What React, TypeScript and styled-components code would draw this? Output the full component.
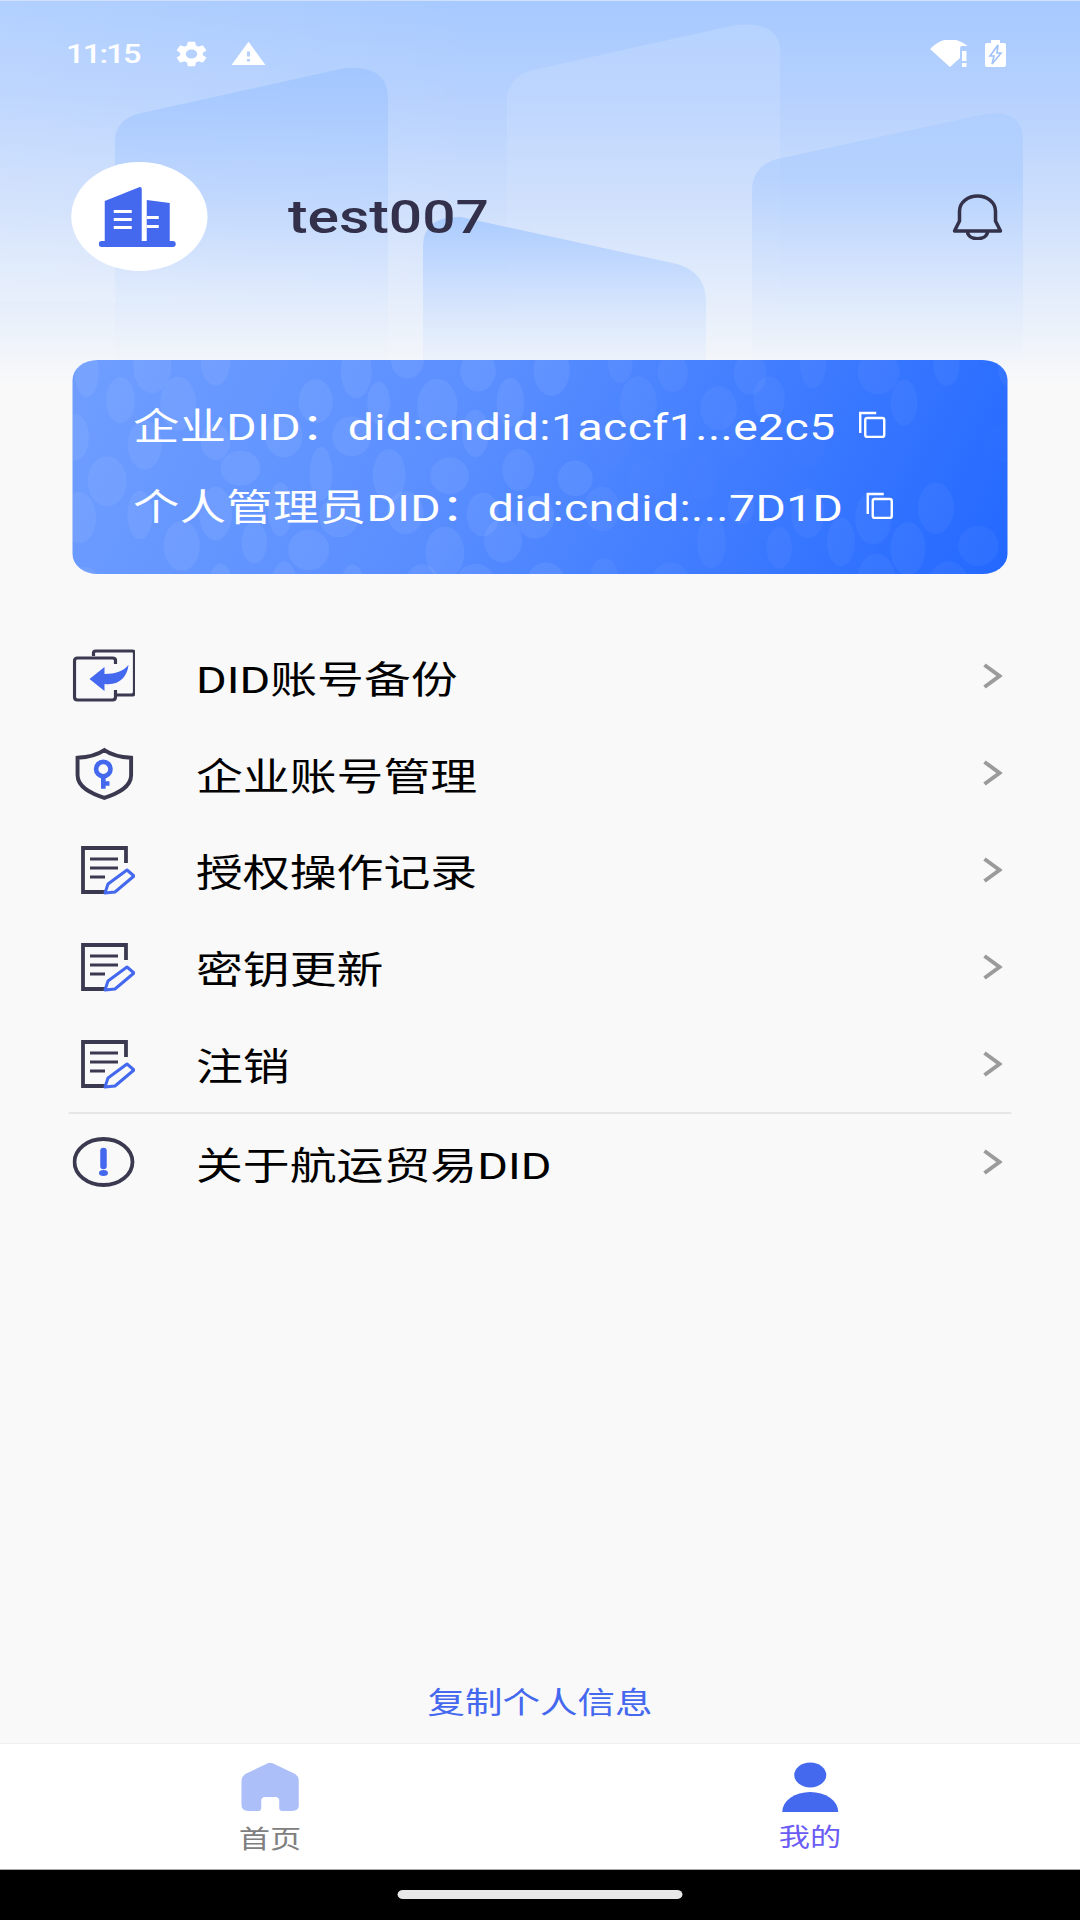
import React from "react";
import styled, { createGlobalStyle } from "styled-components";
import { MdSettings, MdWarning } from "react-icons/md";

// The reference is horizontally stretched: the whole page is laid out at 864px and widened by 1.25.
const STRETCH = 1.25;
const px = (real: number) => `${real / STRETCH}px`;

const Global = createGlobalStyle`
  html, body { margin: 0; padding: 0; width: 1080px; height: 1920px; overflow: hidden; background: #f9f9f9; }
  * { box-sizing: border-box; }
`;

const Page = styled.div`
  position: relative;
  width: 864px;
  height: 1920px;
  display: flex;
  flex-direction: column;
  transform: scaleX(${STRETCH});
  transform-origin: 0 0;
  font-family: Roboto, "Noto Sans CJK SC", sans-serif;
  background:
    linear-gradient(90deg, rgba(255, 255, 255, 0.13) 0%, rgba(255, 255, 255, 0) 45%) top / 100% 300px no-repeat,
    linear-gradient(180deg, #a6c9ff 0%, #b6d1fe 25%, #cfe0fc 55%, #e9f0fb 82%, #f9f9f9 100%) top / 100% 385px no-repeat,
    #f9f9f9;
  border-top: 1px solid #cfe0ff;
`;

const Backdrop = styled.svg`
  position: absolute;
  left: 0;
  top: 0;
  width: 864px;
  height: 385px;
`;

const StatusBar = styled.div`
  position: relative;
  height: 105px;
  padding: 0 ${px(74)} 0 ${px(66)};
  display: flex;
  align-items: center;
  color: #fff;
`;

const Clock = styled.span`
  font-size: 26px;
  font-weight: 500;
  letter-spacing: -1.4px;
  width: ${px(107)};
`;

const StatusGlyph = styled.svg<{ $w: number; $h: number; $gap?: number }>`
  width: ${(p) => px(p.$w)};
  height: ${(p) => p.$h}px;
  margin-left: ${(p) => px(p.$gap ?? 0)};
  flex: none;
`;

const StatusSpacer = styled.div`
  flex: 1;
`;

const Profile = styled.div`
  position: relative;
  display: flex;
  align-items: center;
  height: 109px;
  margin: 56px ${px(78)} 89px ${px(71)};
`;

const Avatar = styled.div`
  width: 108.8px;
  height: 109px;
  padding-right: 2px;
  border-radius: 50%;
  background: #fff;
  display: flex;
  align-items: center;
  justify-content: center;
  flex: none;
`;

const Name = styled.div`
  margin-left: ${px(81)};
  font-size: 47px;
  font-weight: 500;
  color: #32304a;
  flex: 1;
`;

const Card = styled.div`
  position: relative;
  overflow: hidden;
  height: 214px;
  margin: 0 ${px(72)};
  padding: 39px 0 0 ${px(61)};
  border-radius: 20px;
  background: linear-gradient(112deg, #6f9eff 0%, #5b8fff 40%, #2368ff 100%);
  display: flex;
  flex-direction: column;
  gap: 31px;
`;

const Bubbles = styled.svg`
  position: absolute;
  inset: 0;
  width: 100%;
  height: 100%;
`;

const CardLine = styled.div`
  position: relative;
  height: 50px;
  display: flex;
  align-items: center;
  color: #fff;
  font-size: 37px;
  letter-spacing: 0.35px;
  white-space: nowrap;
`;

const CopyIcon = styled.svg`
  width: ${px(30)};
  height: 27px;
  margin-left: ${px(20)};
  flex: none;
`;

const Menu = styled.div`
  margin: 54px ${px(72)} 0;
  display: flex;
  flex-direction: column;
`;

const Row = styled.div`
  height: 96.8px;
  display: flex;
  align-items: center;
  font-size: 37.5px;
  color: #000;
`;

const MenuIcon = styled.svg`
  width: ${px(63)};
  height: 60px;
  margin-right: ${px(61)};
  flex: none;
`;

const RowLabel = styled.div`
  flex: 1;
  white-space: nowrap;
`;

const Chevron = styled.svg`
  width: ${px(20)};
  height: 26px;
  margin-right: ${px(5)};
  flex: none;
`;

const Divider = styled.div`
  height: 2px;
  margin: 0 ${px(-3)};
  background: #e6e6e6;
`;

const CopyLink = styled.div`
  margin-top: auto;
  height: 86px;
  display: flex;
  align-items: center;
  justify-content: center;
  font-size: 30px;
  color: #4468ee;
`;

const TabBar = styled.div`
  height: 126px;
  background: #fff;
  border-top: 1px solid #efefef;
  display: grid;
  grid-template-columns: 1fr 1fr;
`;

const Tab = styled.div<{ $active?: boolean }>`
  display: flex;
  flex-direction: column;
  align-items: center;
  padding-top: 18px;
  font-size: 25px;
  line-height: 38px;
  gap: ${(p) => (p.$active ? 7 : 9)}px;
  color: ${(p) => (p.$active ? "#6a5cf5" : "#808080")};
`;

const TabIcon = styled.svg`
  width: ${px(58)};
  height: 50px;
  flex: none;
`;

const NavBar = styled.div`
  height: 51px;
  background: #000;
  border-top: 1px solid #aaa;
  display: flex;
  justify-content: center;
  padding-top: 20px;
`;

const HomePill = styled.div`
  width: ${px(284)};
  height: 9px;
  border-radius: 5px;
  background: #e8e8e8;
`;

const DARK = "#3a3950";
const BLUE = "#4468ee";

const BackupIcon = () => (
  <g transform="translate(1 4)" fill="none" stroke={DARK} strokeWidth="3.2">
    <path d="M20 6V3q0-2 2-2h37q2 0 2 2v39q0 3-3 3H43" />
    <path d="M42 14v-4q0-2-3-2H4q-3 0-3 3v36q0 3 3 3h35q3 0 3-3v-7" />
    <path d="M16 29 31 17v7c11 0 19-3 24-9-1 11-9 21-24 19v7Z" fill={BLUE} stroke="none" />
  </g>
);

const ShieldIcon = () => (
  <g transform="translate(3 5.5) scale(1.03)" fill="none">
    <path d="M28 1.5C20 7 10 8.5 2 9v17c0 12 14 18 26 22 12-4 26-10 26-22V9c-8-.5-18-2-26-7.5Z" stroke={DARK} strokeWidth="3.8" />
    <circle cx="27" cy="20" r="7" stroke={BLUE} strokeWidth="4.5" />
    <path d="M27 26v13M27 34h6" stroke={BLUE} strokeWidth="4.5" />
  </g>
);

const DocIcon = () => (
  <g transform="translate(8.5 6)" fill="none">
    <path d="M45 17V2H2v44h24" stroke={DARK} strokeWidth="3.8" />
    <path d="M9 13h28M9 22h28M9 31h15" stroke={DARK} strokeWidth="3.2" />
    <path d="M24 47l3-9 19-14 7 6-19 16Z" stroke={BLUE} strokeWidth="3" strokeLinejoin="round" />
  </g>
);

const InfoIcon = () => (
  <g fill="none">
    <ellipse cx="31" cy="30" rx="29" ry="23" stroke={DARK} strokeWidth="3.8" />
    <path d="M31 19v15" stroke={BLUE} strokeWidth="6.5" strokeLinecap="round" />
    <ellipse cx="31" cy="41" rx="4.5" ry="3" fill={BLUE} />
  </g>
);

const rows: { label: string; icon: React.ReactNode }[] = [
  { label: "DID账号备份", icon: <BackupIcon /> },
  { label: "企业账号管理", icon: <ShieldIcon /> },
  { label: "授权操作记录", icon: <DocIcon /> },
  { label: "密钥更新", icon: <DocIcon /> },
  { label: "注销", icon: <DocIcon /> },
];

const bubbleList = (() => {
  const out: { x: number; y: number; rx: number; ry: number; o: number }[] = [];
  const r = (n: number) => {
    const s = Math.sin(n * 127.1 + 11.7) * 43758.5453;
    return s - Math.floor(s);
  };
  for (let row = 0; row < 7; row++) {
    for (let col = 0; col < 15; col++) {
      const id = row * 15 + col;
      const x = col * 66 + (row % 2) * 33 + r(id) * 20;
      const y = row * 36 + r(id + 300) * 14;
      const middle = y > 50 && y < 130;
      const o = x > 520 ? (middle ? 0.012 : 0.045) : 0.065;
      if (r(id + 600) < 0.2) continue;
      out.push({ x, y, rx: 11 + r(id + 900) * 10, ry: 17 + r(id + 1200) * 11, o });
    }
  }
  return out;
})();

const CopySvg = () => (
  <CopyIcon viewBox="0 0 30 27" preserveAspectRatio="none" fill="none" stroke="#fff" strokeWidth="2.4">
    <path d="M4 22V2h16" />
    <rect x="9" y="7" width="19" height="19" rx="2" />
  </CopyIcon>
);

const ChevronSvg = () => (
  <Chevron viewBox="0 0 20 26" preserveAspectRatio="none" fill="none" stroke="#9b9b9b" strokeWidth="4">
    <path d="M2 2 17 13 2 24" />
  </Chevron>
);

export default function App() {
  return (
    <Page>
      <Global />
      <Backdrop viewBox="0 0 1080 385" preserveAspectRatio="none">
        <defs>
          <linearGradient id="bA" gradientUnits="userSpaceOnUse" x1="0" y1="70" x2="0" y2="370">
            <stop offset="0" stopColor="#a2c6ff" stopOpacity="0.95" />
            <stop offset="0.55" stopColor="#b6d2ff" stopOpacity="0.35" />
            <stop offset="1" stopColor="#dfeaff" stopOpacity="0" />
          </linearGradient>
          <linearGradient id="bB" gradientUnits="userSpaceOnUse" x1="0" y1="24" x2="0" y2="370">
            <stop offset="0" stopColor="#ffffff" stopOpacity="0.14" />
            <stop offset="1" stopColor="#ffffff" stopOpacity="0" />
          </linearGradient>
          <linearGradient id="bC" gradientUnits="userSpaceOnUse" x1="0" y1="113" x2="0" y2="370">
            <stop offset="0" stopColor="#a6c9ff" stopOpacity="0.5" />
            <stop offset="0.25" stopColor="#a6c9ff" stopOpacity="0.55" />
            <stop offset="1" stopColor="#d6e5ff" stopOpacity="0" />
          </linearGradient>
          <linearGradient id="bD" gradientUnits="userSpaceOnUse" x1="0" y1="216" x2="0" y2="370">
            <stop offset="0" stopColor="#a6c9ff" stopOpacity="0.9" />
            <stop offset="1" stopColor="#d6e5ff" stopOpacity="0.15" />
          </linearGradient>
        </defs>
        <path d="M115 140q0-20 22-27L345 67q43-3 43 30V385H115Z" fill="url(#bA)" />
        <path d="M507 100q0-22 22-30L735 24q45-4 45 26V385H507Z" fill="url(#bB)" />
        <path d="M752 190q0-25 25-32L985 113q38-5 38 25V385H752Z" fill="url(#bC)" />
        <path d="M423 245q0-30 38-29L677 263q29 8 29 38V385H423Z" fill="url(#bD)" />
      </Backdrop>

      <StatusBar>
        <Clock>11:15</Clock>
        <StatusGlyph as={MdSettings} $w={38} $h={34} />
        <StatusGlyph as={MdWarning} $w={37} $h={32} $gap={19} />
        <StatusSpacer />
        <StatusGlyph viewBox="0 0 38 27" preserveAspectRatio="none" $w={38} $h={27} fill="#fff">
          <path d="M0 9Q18-9 38 6H31q-1 1-1 4v8L20 27Z" />
          <path d="M32 11h4.5v10H32zM32 23h4.5v4H32z" />
        </StatusGlyph>
        <StatusGlyph viewBox="0 0 21 27" preserveAspectRatio="none" $w={21} $h={27} $gap={17}>
          <path d="M6 0h9v3h4q2 0 2 2v20q0 2-2 2H2q-2 0-2-2V5q0-2 2-2h4Z" fill="#fff" />
          <path d="M13 5 5 16h4l-2 8 9-11h-4Z" fill="#fff" stroke="#9fc2fb" strokeWidth="1.6" />
        </StatusGlyph>
      </StatusBar>

      <Profile>
        <Avatar>
          <svg viewBox="0 0 77 62" preserveAspectRatio="none" width={77 / STRETCH} height={62} fill={BLUE}>
            <path d="M6 15 41 1q2 0 2 2v54H6Z" />
            <path d="M48 14l23 3v40H48Z" />
            <rect x="0" y="55" width="77" height="6" rx="3" />
            <path d="M15 24h18v3H15zM15 32h18v3H15zM15 40h18v3H15zM48 30h12v3H48zM48 39h12v3H48z" fill="#fff" />
          </svg>
        </Avatar>
        <Name>test007</Name>
        <svg viewBox="0 0 50 46" preserveAspectRatio="none" width={50 / STRETCH} height={46} fill="none" stroke="#33324a" strokeWidth="3.5">
          <path d="M2 37h46l-5-10V17C43 8 34 2 25 2S7 8 7 17v10Z" strokeLinejoin="round" />
          <path d="M15 38c1 9 19 9 20 0" />
        </svg>
      </Profile>

      <Card>
        <Bubbles viewBox="0 0 936 214" preserveAspectRatio="none">
          {bubbleList.map((b, i) => (
            <ellipse key={i} cx={b.x} cy={b.y} rx={b.rx} ry={b.ry} fill="#fff" fillOpacity={b.o} />
          ))}
        </Bubbles>
        <CardLine>
          企业DID：did:cndid:1accf1...e2c5
          <CopySvg />
        </CardLine>
        <CardLine>
          个人管理员DID：did:cndid:...7D1D
          <CopySvg />
        </CardLine>
      </Card>

      <Menu>
        {rows.map((r) => (
          <Row key={r.label}>
            <MenuIcon viewBox="0 0 63 60" preserveAspectRatio="none">{r.icon}</MenuIcon>
            <RowLabel>{r.label}</RowLabel>
            <ChevronSvg />
          </Row>
        ))}
        <Divider />
        <Row>
          <MenuIcon viewBox="0 0 63 60" preserveAspectRatio="none"><InfoIcon /></MenuIcon>
          <RowLabel>关于航运贸易DID</RowLabel>
          <ChevronSvg />
        </Row>
      </Menu>

      <CopyLink>复制个人信息</CopyLink>

      <TabBar>
        <Tab>
          <TabIcon viewBox="0 0 58 50" preserveAspectRatio="none" fill="#adbff8">
            <path d="M24 2.5q5-3.5 10 0L54 12q4 3 4 8v22q0 7-7 7H41q-3 0-3-3v-7q0-4-4-4H24q-4 0-4 4v7q0 3-3 3H7q-7 0-7-7V20q0-5 4-8Z" />
          </TabIcon>
          首页
        </Tab>
        <Tab $active>
          <TabIcon viewBox="0 0 58 50" preserveAspectRatio="none" fill={BLUE}>
            <ellipse cx="29" cy="13" rx="16" ry="12.5" />
            <path d="M1 50a28 20 0 0 1 56 0Z" />
          </TabIcon>
          我的
        </Tab>
      </TabBar>

      <NavBar>
        <HomePill />
      </NavBar>
    </Page>
  );
}
